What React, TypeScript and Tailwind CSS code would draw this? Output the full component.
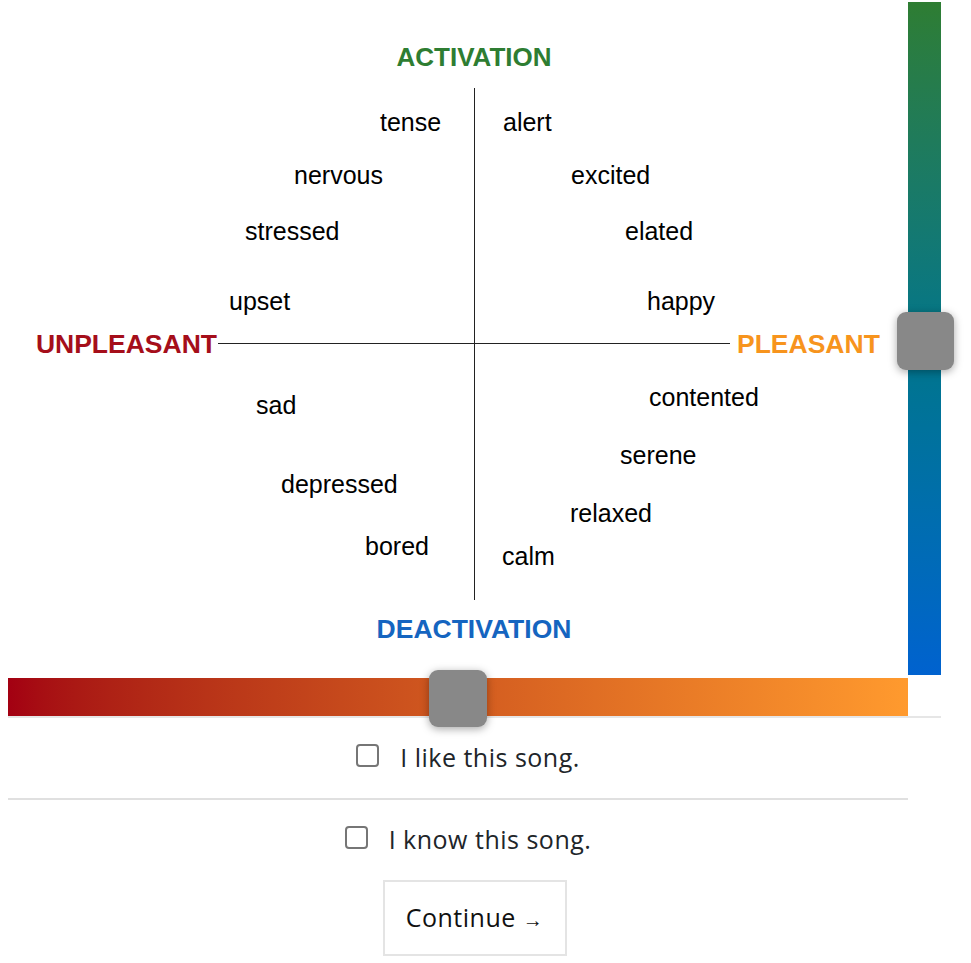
import React from "react";

const words: { t: string; x: number; y: number }[] = [
  { t: "tense", x: 380, y: 122 },
  { t: "alert", x: 503, y: 122 },
  { t: "nervous", x: 294, y: 175 },
  { t: "excited", x: 571, y: 175 },
  { t: "stressed", x: 245, y: 231 },
  { t: "elated", x: 625, y: 231 },
  { t: "upset", x: 229, y: 301 },
  { t: "happy", x: 647, y: 301 },
  { t: "sad", x: 256, y: 405 },
  { t: "contented", x: 649, y: 397 },
  { t: "serene", x: 620, y: 455 },
  { t: "depressed", x: 281, y: 484 },
  { t: "relaxed", x: 570, y: 513 },
  { t: "bored", x: 365, y: 546 },
  { t: "calm", x: 502, y: 556 },
];

function CheckRow({ label }: { label: string }) {
  return (
    <div className="flex h-[80px] items-center justify-center pr-[13px]">
      <div className="flex items-center gap-[21px]">
        <span className="inline-block w-[23px] h-[23px] rounded-[4px] border-2 border-[#767676] bg-white mt-[-6px]" />
        <span className="text-[25px] tracking-[0.5px]">{label}</span>
      </div>
    </div>
  );
}

export default function App() {
  return (
    <div className="w-[971px] bg-white pl-[8px] pt-[2px]">
      <div className="w-[933px]">
        {/* top: diagram + vertical slider */}
        <div className="flex">
          <div className="relative w-[900px] h-[676px] font-['Liberation_Sans',Arial,sans-serif] text-black">
            {/* axes */}
            <div className="absolute left-[466px] top-[86px] w-[1px] h-[512px] bg-[#222]" />
            <div className="absolute left-[210px] top-[341px] w-[512px] h-[1px] bg-[#222]" />
            <div className="absolute left-[466px] top-[55px] -translate-x-1/2 -translate-y-1/2 text-[26px] font-bold text-[#2e7d32] leading-none">
              ACTIVATION
            </div>
            <div className="absolute left-[466px] top-[627px] -translate-x-1/2 -translate-y-1/2 text-[26.5px] font-bold text-[#1565c0] leading-none">
              DEACTIVATION
            </div>
            <div className="absolute right-[691px] top-[342px] -translate-y-1/2 text-[26.5px] font-bold text-[#a50e1a] leading-none">
              UNPLEASANT
            </div>
            <div className="absolute left-[729px] top-[342px] -translate-y-1/2 text-[26.5px] font-bold text-[#f7941d] leading-none">
              PLEASANT
            </div>
            {words.map((w) => (
              <div
                key={w.t}
                className="absolute -translate-y-1/2 text-[25px] leading-none whitespace-nowrap"
                style={{ left: w.x - 8, top: w.y - 2 }}
              >
                {w.t}
              </div>
            ))}
          </div>
          <div className="relative w-[33px] h-[673px] bg-gradient-to-b from-[#2e7d32] to-[#0062cf]">
            <div className="absolute left-[-11px] top-[310px] w-[57px] h-[58px] rounded-[9px] bg-[#888888] shadow-[0_2px_8px_rgba(0,0,0,0.35)]" />
          </div>
        </div>
        {/* horizontal slider */}
        <div className="relative w-[900px] h-[38px] bg-gradient-to-r from-[#a30012] to-[#ff9a2e]">
          <div className="absolute left-[421px] top-[-8px] w-[58px] h-[57px] rounded-[9px] bg-[#888888] shadow-[0_2px_8px_rgba(0,0,0,0.35)]" />
        </div>
        <div className="h-[2px] w-[933px] bg-[#e6e6e6]" />
        <div className="font-['Open_Sans','Noto_Sans',sans-serif] text-[#212529]">
          <CheckRow label="I like this song." />
          <div className="h-[2px] w-[900px] bg-[#e0e0e0]" />
          <CheckRow label="I know this song." />
          <div className="flex justify-center">
            <button className="w-[184px] h-[76px] border-2 border-[#e4e4e4] bg-white text-[25px] tracking-[0.5px] text-[#111]">
              Continue <span className="text-[20px]">→</span>
            </button>
          </div>
        </div>
      </div>
    </div>
  );
}
